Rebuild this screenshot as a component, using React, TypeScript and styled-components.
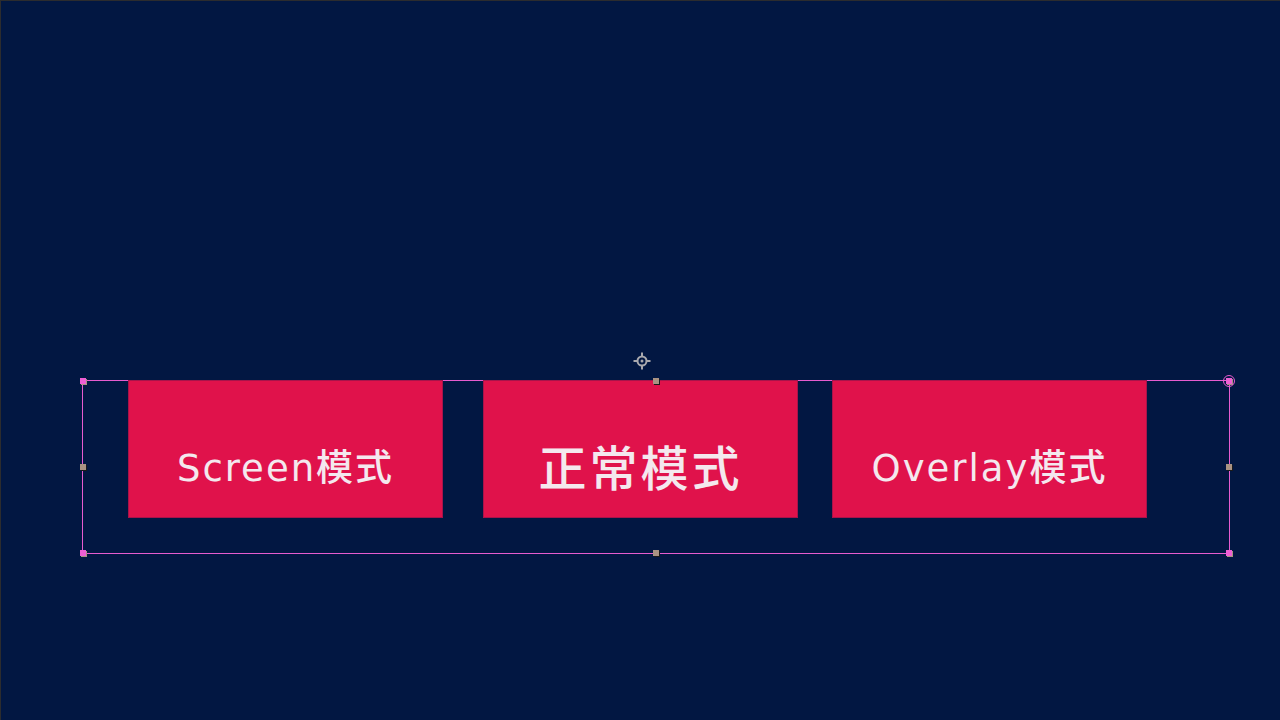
import styled, { createGlobalStyle } from 'styled-components';

const GlobalStyle = createGlobalStyle`
    html, body {
        margin: 0;
        padding: 0;
        background-color: #021742;
        font-family: "DejaVu Sans", "Noto Sans CJK SC", sans-serif;
    }
`;

const Stage = styled.div`
    box-sizing: border-box;
    width: 1280px;
    height: 720px;
    background-color: #021742;
    border-top: 1px solid #2c2c2e;
    border-left: 1px solid #2c2c2e;
    padding-top: 379px;
    padding-left: 81px;
    overflow: hidden;
`;

const Selection = styled.div`
    position: relative;
    box-sizing: border-box;
    width: 1148px;
    height: 174px;
    border: 1px solid #e65ccf;
    display: flex;
    align-items: flex-start;
    padding-left: 45px;
`;

const ModeButton = styled.div<{ $offset: number; $big?: boolean }>`
    box-sizing: border-box;
    width: 315px;
    height: 138px;
    margin-left: ${(p) => p.$offset}px;
    margin-top: -1px;
    background-color: #e0124b;
    border: 1px solid #a8134a;
    display: flex;
    align-items: center;
    justify-content: center;
    padding-top: 31px;
    color: #f4e8ee;
    font-family: ${(p) => (p.$big ? '"Noto Sans CJK SC", sans-serif' : '"DejaVu Sans", "Noto Sans CJK SC", sans-serif')};
    font-size: ${(p) => (p.$big ? '48px' : '37px')};
    font-weight: 500;
    letter-spacing: ${(p) => (p.$big ? '3px' : '2px')};
    white-space: nowrap;
`;

/* overlay grid that puts the transform handles on the frame's edges */
const HandleFrame = styled.div`
    position: absolute;
    inset: -3px;
    display: grid;
    grid-template-columns: 6px 1fr 6px;
    grid-template-rows: 6px 1fr 6px;
    pointer-events: none;
`;

const Handle = styled.span<{ $corner?: boolean; $ring?: boolean }>`
    position: relative;
    width: 6px;
    height: 6px;
    justify-self: center;
    align-self: center;
    background-color: ${(p) => (p.$corner ? '#ee5fd4' : '#a99383')};
    box-shadow: 1px 1px 0 ${(p) => (p.$corner ? '#a99383' : '#1a1a1a')};

    &::after {
        content: '';
        display: ${(p) => (p.$ring ? 'block' : 'none')};
        position: absolute;
        inset: -3px;
        border-radius: 50%;
        border: 1px solid #e65ccf;
    }
`;

const Empty = styled.span``;

const Pivot = styled.svg`
    position: absolute;
    left: 550px;
    top: -29px;
`;

export default function App() {
    return (
        <Stage>
            <GlobalStyle />
            <Selection>
                <ModeButton $offset={0}>Screen模式</ModeButton>
                <ModeButton $offset={40} $big>正常模式</ModeButton>
                <ModeButton $offset={34}>Overlay模式</ModeButton>

                <Pivot width="18" height="18" viewBox="0 0 18 18">
                    <circle cx="9" cy="9" r="4.5" fill="none" stroke="#a9a9ae" strokeWidth="2" />
                    <circle cx="9" cy="9" r="1.5" fill="#a9a9ae" />
                    <path d="M9 0.5 V4 M9 14 V17.5 M0.5 9 H4 M14 9 H17.5" stroke="#a9a9ae" strokeWidth="2" />
                </Pivot>

                <HandleFrame>
                    <Handle $corner />
                    <Handle />
                    <Handle $corner $ring />
                    <Handle />
                    <Empty />
                    <Handle />
                    <Handle $corner />
                    <Handle />
                    <Handle $corner />
                </HandleFrame>
            </Selection>
        </Stage>
    );
}
